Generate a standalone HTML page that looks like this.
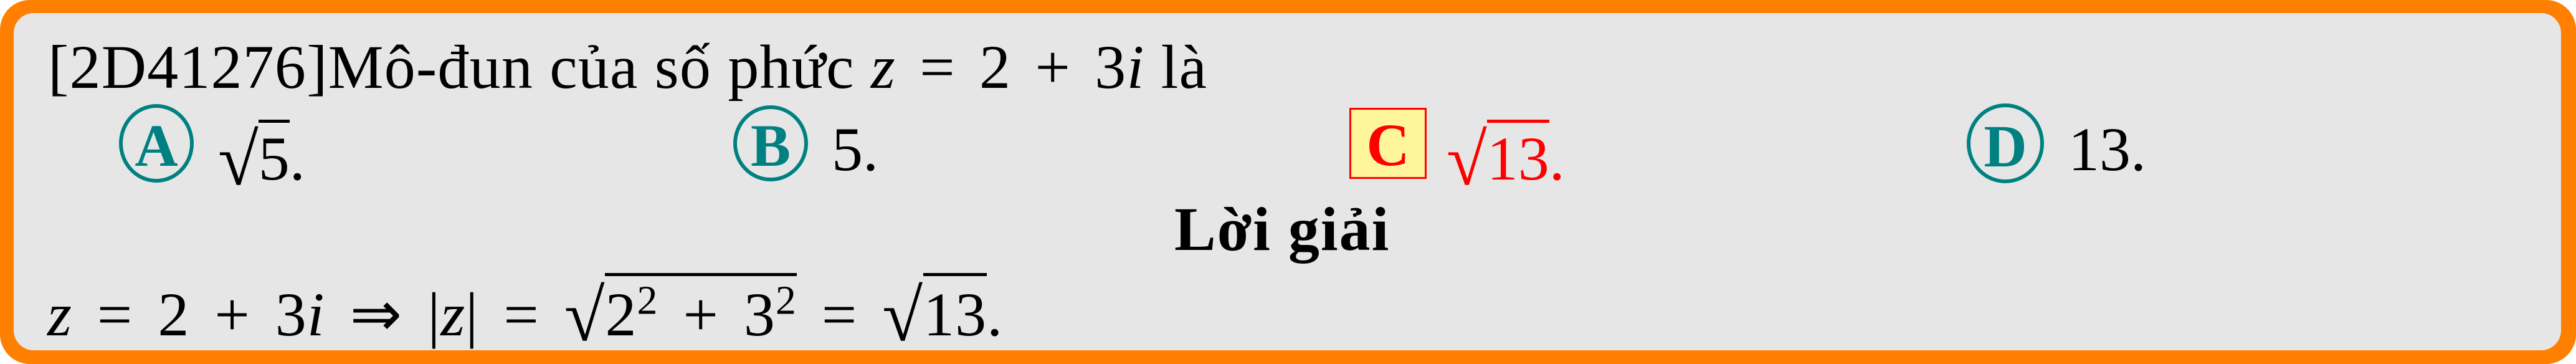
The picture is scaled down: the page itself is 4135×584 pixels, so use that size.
<!DOCTYPE html>
<html><head><meta charset="utf-8"><style>
html,body{margin:0;padding:0;}
body{width:4135px;height:584px;position:relative;overflow:hidden;background:#fff;font-family:"Liberation Serif",serif;}
.frame{position:absolute;left:0;top:0;width:4135px;height:584px;box-sizing:border-box;background:#ff8000;border-radius:48px;}
.inner{position:absolute;left:22px;top:21px;width:4089px;height:541px;background:#e6e6e6;border-radius:32px;}
.t{position:absolute;font-size:100px;line-height:1;white-space:nowrap;color:#000;}
i{font-style:italic;}
.op{margin:0 12px;}
.op2{margin:0 14px;}
.rad{font-size:118px;display:inline-block;transform:translateY(8px);}
.circ{position:absolute;border:6px solid #008080;border-radius:50%;box-sizing:border-box;color:#008080;font-weight:bold;font-size:96px;text-align:center;}
</style></head><body>
<div class="frame"></div>
<div class="inner"></div>

<div class="t" style="left:77px;top:58px;letter-spacing:1.2px;">[2D41276]Mô-đun của số phức <i>z</i>&nbsp;<span class="op">=</span>&nbsp;2&nbsp;<span class="op">+</span>&nbsp;3<i>i</i> là</div>

<div class="circ" style="left:191px;top:167px;width:120px;height:126px;line-height:122px;">A</div>
<div class="t" style="left:350px;top:190px;"><span class="rad">√</span><span style="border-top:5px solid #000;padding-top:2px">5</span>.</div>

<div class="circ" style="left:1177px;top:169px;width:120px;height:122px;line-height:118px;">B</div>
<div class="t" style="left:1335px;top:190px;">5.</div>

<div style="position:absolute;left:2166px;top:173px;width:124px;height:114px;background:#fff59a;border:3px solid #ff0000;box-sizing:border-box;color:#ff0000;font-size:96px;font-weight:bold;text-align:center;line-height:114px;">C</div>
<div class="t" style="left:2322px;top:190px;color:#ff0000;"><span class="rad">√</span><span style="border-top:5px solid #ff0000;padding-top:2px">13</span>.</div>

<div class="circ" style="left:3157px;top:166px;width:124px;height:128px;line-height:126px;">D</div>
<div class="t" style="left:3320px;top:190px;">13.</div>

<div class="t" style="left:1885px;top:318px;font-weight:bold;font-size:100px;letter-spacing:2px;">Lời giải</div>

<div class="t" style="left:76px;top:440px;letter-spacing:1px;"><i>z</i>&nbsp;<span class="op2">=</span>&nbsp;2&nbsp;<span class="op2">+</span>&nbsp;3<i>i</i>&nbsp;<span class="op2">⇒</span>&nbsp;|<i>z</i>|&nbsp;<span class="op2">=</span>&nbsp;<span class="rad">√</span><span style="border-top:5px solid #000;padding-top:6px">2<sup style="font-size:66px;line-height:0">2</sup>&nbsp;<span class="op2">+</span>&nbsp;3<sup style="font-size:66px;line-height:0">2</sup></span>&nbsp;<span class="op2">=</span>&nbsp;<span class="rad">√</span><span style="border-top:5px solid #000;padding-top:6px">13</span>.</div>
</body></html>
